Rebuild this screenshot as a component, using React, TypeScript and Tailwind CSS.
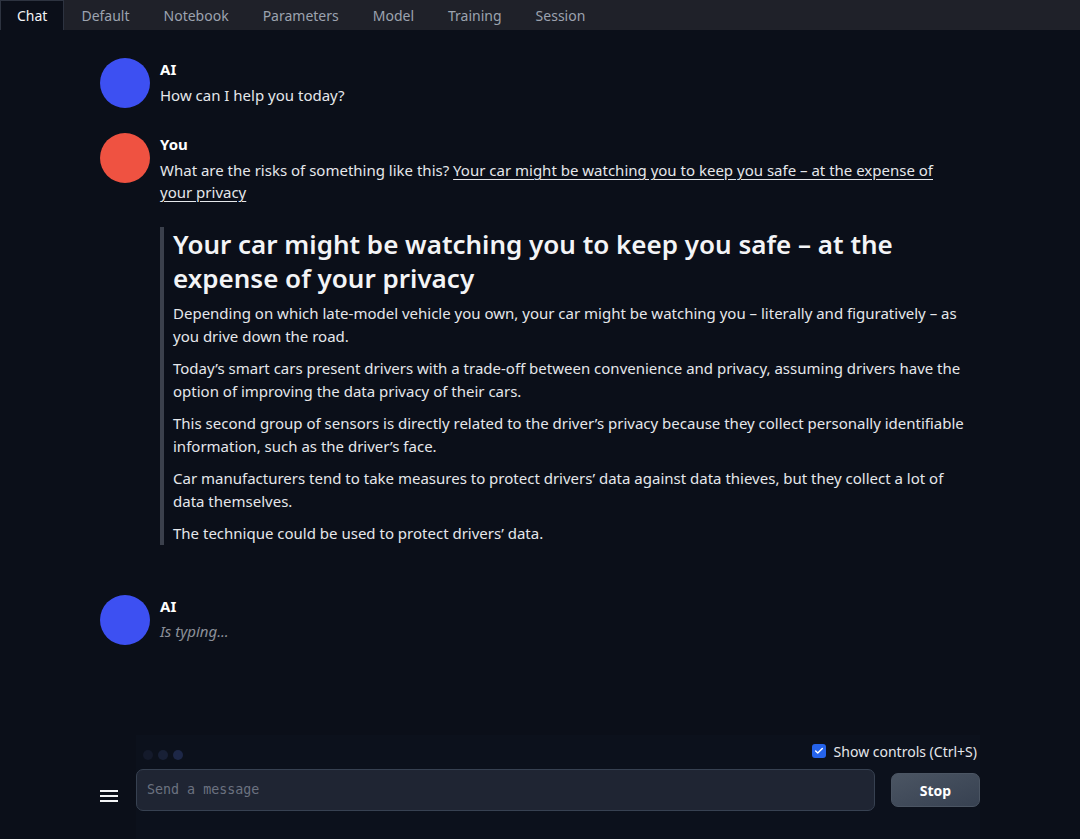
import { Check } from 'lucide-react'

const tabs = ['Chat', 'Default', 'Notebook', 'Parameters', 'Model', 'Training', 'Session']

const paragraphs = [
  'Depending on which late-model vehicle you own, your car might be watching you – literally and figuratively – as you drive down the road.',
  'Today’s smart cars present drivers with a trade-off between convenience and privacy, assuming drivers have the option of improving the data privacy of their cars.',
  'This second group of sensors is directly related to the driver’s privacy because they collect personally identifiable information, such as the driver’s face.',
  'Car manufacturers tend to take measures to protect drivers’ data against data thieves, but they collect a lot of data themselves.',
  'The technique could be used to protect drivers’ data.',
]

function Avatar({ color }: { color: string }) {
  return <div className={`w-[50px] h-[50px] rounded-full shrink-0 ${color}`} />
}

export default function App() {
  return (
    <div
      className="min-h-[839px] h-[839px] bg-[#0b0f19] text-[#e5e7eb] flex flex-col overflow-hidden"
      style={{ fontFamily: '"Noto Sans", sans-serif' }}
    >
      {/* Tabs */}
      <div className="flex h-[30px] bg-[#1f2129] shrink-0">
        {tabs.map((t, i) => (
          <div
            key={t}
            className={
              i === 0
                ? 'px-[16px] h-full flex items-center text-[14px] text-[#f3f4f6] bg-[#0b0f19] border border-b-0 border-[#2d3340]'
                : 'px-[17px] h-full flex items-center text-[14px] text-[#9ca3af]'
            }
          >
            {t}
          </div>
        ))}
      </div>

      {/* Chat */}
      <div className="w-[880px] mx-auto flex-1 pt-[28px]">
        <div className="flex gap-[10px]">
          <Avatar color="bg-[#3d50f2]" />
          <div className="text-[15px]">
            <div className="font-bold leading-[22px] text-white">AI</div>
            <div className="leading-[23px] mt-[4px]">How can I help you today?</div>
          </div>
        </div>

        <div className="flex gap-[10px] mt-[25px]">
          <Avatar color="bg-[#ef5241]" />
          <div className="text-[15px] w-[805px]">
            <div className="font-bold leading-[22px] text-white">You</div>
            <div className="leading-[22px] mt-[4px]">
              What are the risks of something like this?{' '}
              <span className="underline underline-offset-[3px]">
                Your car might be watching you to keep you safe – at the expense of your privacy
              </span>
            </div>
            <div className="mt-[25px] border-l-4 border-[#3b404c] pl-[9px]">
              <div className="text-[26px] font-semibold leading-[34px] text-[#f3f4f6] -mt-[1px]">
                Your car might be watching you to keep you safe – at the expense of your privacy
              </div>
              <div className="mt-[7px] flex flex-col gap-[9px]">
                {paragraphs.map((p) => (
                  <p key={p} className="leading-[23px]">
                    {p}
                  </p>
                ))}
              </div>
            </div>
          </div>
        </div>

        <div className="flex gap-[10px] mt-[50px]">
          <Avatar color="bg-[#3d50f2]" />
          <div className="text-[15px]">
            <div className="font-bold leading-[22px] text-white">AI</div>
            <div className="leading-[23px] mt-[3px] italic text-[#8b8f98]">Is typing...</div>
          </div>
        </div>
      </div>

      {/* Bottom controls */}
      <div className="w-[880px] mx-auto shrink-0 h-[104px] flex">
        <div className="w-[36px] flex items-end pb-[37px]">
          <svg width="18" height="12" viewBox="0 0 18 12">
            <rect x="0" y="0" width="18" height="2" fill="#f3f4f6" />
            <rect x="0" y="5" width="18" height="2" fill="#f3f4f6" />
            <rect x="0" y="10" width="18" height="2" fill="#f3f4f6" />
          </svg>
        </div>
        <div className="flex-1 bg-[#0c111c] pt-[7px]">
          <div className="flex items-center justify-between h-[18px] pl-[7px]">
            <div className="flex gap-[5px] mt-[8px]">
              <span className="w-[10px] h-[10px] rounded-full bg-[#141a2b]" />
              <span className="w-[10px] h-[10px] rounded-full bg-[#182036]" />
              <span className="w-[10px] h-[10px] rounded-full bg-[#1d2747]" />
            </div>
            <label className="flex items-center gap-[8px] text-[14px] text-[#e5e7eb] mr-[3px]">
              <span className="w-[14px] h-[14px] rounded-[3px] bg-[#2563eb] flex items-center justify-center">
                <Check size={10} strokeWidth={3.5} color="white" />
              </span>
              Show controls (Ctrl+S)
            </label>
          </div>
          <div className="flex items-center mt-[9px]">
            <div
              className="flex-1 h-[42px] rounded-[7px] bg-[#1f2533] border border-[#374151] px-[10px] flex items-center text-[13.33px] text-[#6b7280]"
              style={{ fontFamily: '"DejaVu Sans Mono", monospace' }}
            >
              Send a message
            </div>
            <button className="ml-[16px] w-[89px] h-[34px] rounded-[7px] border border-[#4b5563] bg-gradient-to-br from-[#4b5563] to-[#374151] text-white font-bold text-[14px]">
              Stop
            </button>
          </div>
        </div>
      </div>
    </div>
  )
}
